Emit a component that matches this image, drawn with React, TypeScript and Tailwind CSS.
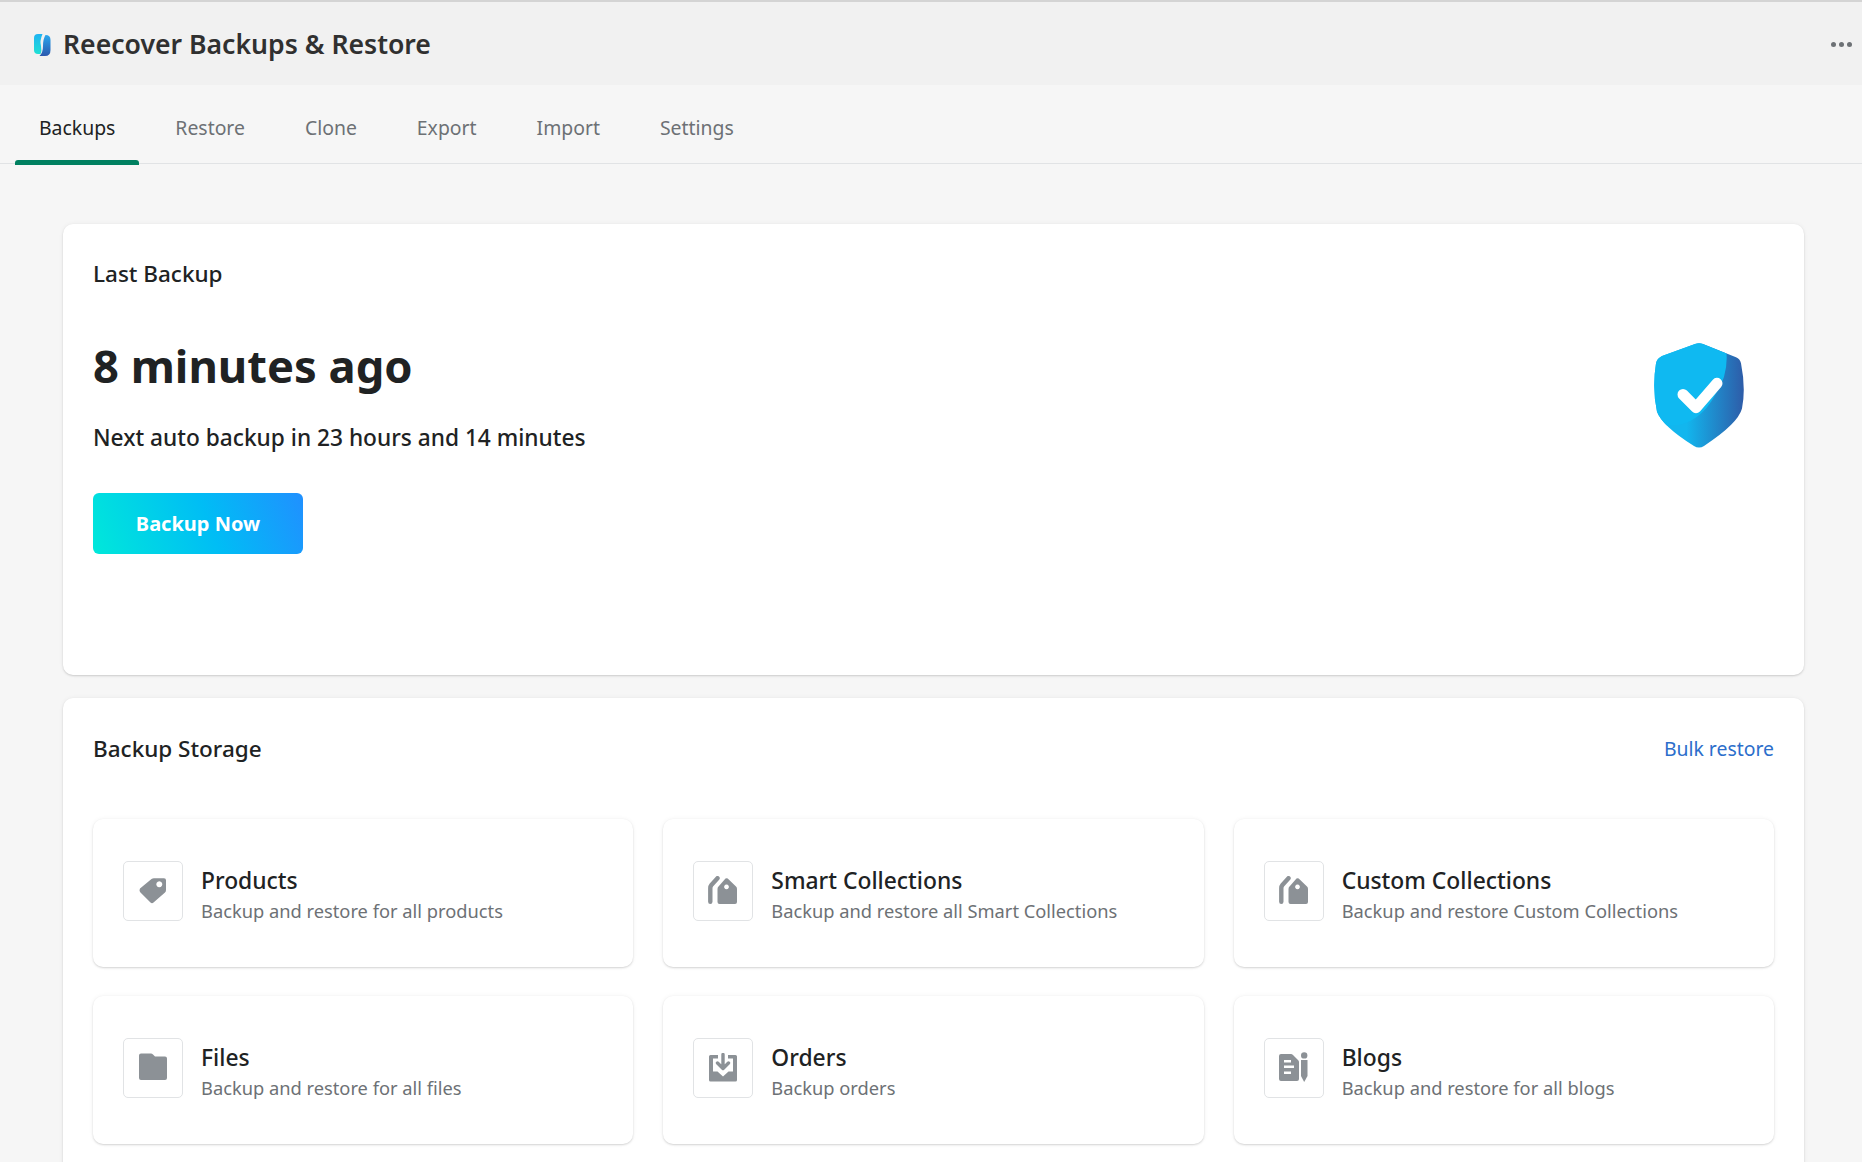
import React from "react";

const Tag = () => (
  <svg width="28" height="28" viewBox="0 0 28 28" fill="#8c9196" className="mt-[2px]">
    <path fillRule="evenodd" d="M1 11.5 12.5 2Q13.5 1.3 15 1.3H25Q27 1.3 27 3.3V13Q27 14.5 26 15.5L14.5 25.5Q13 26.8 11.5 25.5L1 15Q0 13 1 11.5ZM20.3 4.2a3 3 0 1 0 .01 0Z" />
  </svg>
);
const Collection = () => (
  <svg width="30" height="29" viewBox="0 0 30 29" fill="#8c9196">
    <path d="M9.5 2.2 3.4 9Q2.3 10.3 2.3 12.2V25.8" fill="none" stroke="#8c9196" strokeWidth="4.4" strokeLinecap="round" />
    <path fillRule="evenodd" d="M17.5 2.6Q18.6 1.8 19.7 2.6L28 10.6Q29 11.6 29 13V26Q29 28 27 28H11.5Q9.5 28 9.5 26V13Q9.5 11.6 10.5 10.6ZM18.5 8.5a2.4 2.4 0 1 0 .01 0Z" />
  </svg>
);
const Folder = () => (
  <svg width="28" height="28" viewBox="0 0 28 28" fill="#8c9196">
    <path d="M2 .5H12Q13 .5 14 1.5L16 3.5H26Q28 3.5 28 5.5V25Q28 27 26 27H2Q0 27 0 25V2.5Q0 .5 2 .5Z" />
  </svg>
);
const Inbox = () => (
  <svg width="28" height="29" viewBox="0 0 28 29" fill="#8c9196">
    <path d="M1.5 2H9V5.5H4V18.5H8.5L14 23.5 19.5 18.5H24V5.5H19V2H26.5Q28 2 28 3.5V27Q28 28.5 26.5 28.5H1.5Q0 28.5 0 27V3.5Q0 2 1.5 2Z" />
    <path d="M14 1.5V14.5M8.5 10 14 15.5 19.5 10" fill="none" stroke="#8c9196" strokeWidth="3.4" strokeLinecap="round" strokeLinejoin="round" />
  </svg>
);
const Blog = () => (
  <svg width="29" height="30" viewBox="0 0 29 30" fill="#8c9196">
    <path fillRule="evenodd" d="M2 2H12Q13 2 14 3L19 8Q20 9 20 10V27Q20 29 18 29H2Q0 29 0 27V4Q0 2 2 2ZM5 8V10.5H12V8ZM5 13.5V16H15V13.5ZM5 19.5V22H12V19.5Z" />
    <circle cx="25.2" cy="3.4" r="3.2" />
    <path d="M22 8H28.5V24L25.2 30 22 24Z" />
  </svg>
);

const Shield = () => (
  <svg width="90" height="106" viewBox="0 0 90 105" preserveAspectRatio="none">
    <defs>
      <linearGradient id="shield" x1="0.2" y1="0" x2="1" y2="0">
        <stop offset="0.2" stopColor="#12b6ee" />
        <stop offset="1" stopColor="#2e5ca8" />
      </linearGradient>
      <clipPath id="shieldClip">
        <path d="M41 1Q45-.5 49 1L82 14Q86 15.5 87 20Q92 45 88 65Q84 80 50 102Q45 105 40 102Q8 82 3 68Q-2 45 2 20Q3 15.5 8 13Z" />
      </clipPath>
    </defs>
    <path d="M41 1Q45-.5 49 1L82 14Q86 15.5 87 20Q92 45 88 65Q84 80 50 102Q45 105 40 102Q8 82 3 68Q-2 45 2 20Q3 15.5 8 13Z" fill="url(#shield)" />
    <path d="M-2-2H71Q77 28 62 50Q45 82 15 82H-2Z" fill="#0fb9f1" clipPath="url(#shieldClip)" />
    <path d="M29 51 42 64 63 40" fill="none" stroke="#fff" strokeWidth="11" strokeLinecap="round" strokeLinejoin="round" />
  </svg>
);

const Logo = () => (
  <svg width="20" height="24" viewBox="0 0 20 24" className="mt-[2px]">
    <defs>
      <linearGradient id="logoA" x1="0" y1="0" x2="0" y2="1">
        <stop offset="0" stopColor="#1fb4f2" />
        <stop offset="1" stopColor="#1fe0d4" />
      </linearGradient>
      <linearGradient id="logoB" x1="0" y1="0" x2="0" y2="1">
        <stop offset="0" stopColor="#2aa8ee" />
        <stop offset="1" stopColor="#2b58ae" />
      </linearGradient>
    </defs>
    <path d="M6 1H10.5Q7.5 8 9 13 10 18 8.5 21H6Q2 21 2 17V5Q2 1 6 1Z" fill="url(#logoA)" />
    <path d="M13.5 2Q18.5 2 18.5 7V17Q18.5 23 13 23H7.5Q11 20 11 13 11 6 13.5 2Z" fill="url(#logoB)" />
  </svg>
);

const items = [
  { title: "Products", desc: "Backup and restore for all products", icon: <Tag /> },
  { title: "Smart Collections", desc: "Backup and restore all Smart Collections", icon: <Collection /> },
  { title: "Custom Collections", desc: "Backup and restore Custom Collections", icon: <Collection /> },
  { title: "Files", desc: "Backup and restore for all files", icon: <Folder /> },
  { title: "Orders", desc: "Backup orders", icon: <Inbox /> },
  { title: "Blogs", desc: "Backup and restore for all blogs", icon: <Blog /> },
];

const tabs = ["Backups", "Restore", "Clone", "Export", "Import", "Settings"];

export default function App() {
  return (
    <div className="h-[1162px] overflow-hidden bg-[#f6f6f6] font-['Noto_Sans','Liberation_Sans',sans-serif] text-[#202223]">
      <header className="flex h-[85px] items-center justify-between border-t-2 border-[#d4d4d4] bg-[#f1f1f1] pl-[32px] pr-[10px]">
        <div className="flex items-center gap-[11px]">
          <Logo />
          <h1 className="mt-[2px] text-[26.6px] font-semibold leading-none text-[#303030]">Reecover Backups &amp; Restore</h1>
        </div>
        <div className="mt-[2px] flex gap-[3px]">
          <span className="h-[5px] w-[5px] rounded-full bg-[#6d7175]" />
          <span className="h-[5px] w-[5px] rounded-full bg-[#6d7175]" />
          <span className="h-[5px] w-[5px] rounded-full bg-[#6d7175]" />
        </div>
      </header>
      <nav className="flex h-[79px] items-stretch gap-[12px] border-b border-[#e1e3e5] pl-[15px]">
        {tabs.map((t, i) => (
          <div key={t} className={`relative flex items-center px-[24px] pt-[7px] text-[19.4px] ${i === 0 ? "text-[#202223]" : "text-[#6d7175]"}`}>
            {t}
            {i === 0 && <span className="absolute bottom-[-2px] left-0 right-0 h-[5px] rounded-t-[3px] bg-[#008060]" />}
          </div>
        ))}
      </nav>
      <main className="flex flex-col gap-[23px] pl-[63px] pr-[58px] pt-[60px]">
        <section className="flex h-[451px] justify-between rounded-[10px] bg-white px-[30px] pt-[34px] shadow-[0_0_5px_rgba(23,24,24,0.05),0_1px_2px_rgba(0,0,0,0.15)]">
          <div className="flex flex-col items-start">
            <h2 className="text-[22.5px] font-medium leading-[32px]">Last Backup</h2>
            <p className="mt-[46px] text-[45.3px] font-bold leading-[60px]">8 minutes ago</p>
            <p className="mt-[26px] text-[22.7px] font-medium leading-[32px]">Next auto backup in 23 hours and 14 minutes</p>
            <button className="mt-[39px] flex h-[61px] w-[210px] items-center justify-center rounded-[6px] bg-[linear-gradient(68deg,#00e8da,#00bdf5_55%,#2090ff)] text-[20px] font-bold text-white">
              Backup Now
            </button>
          </div>
          <div className="pr-[30px] pt-[85px]">
            <Shield />
          </div>
        </section>
        <section className="rounded-[10px] bg-white px-[30px] pb-[30px] pt-[35px] shadow-[0_0_5px_rgba(23,24,24,0.05),0_1px_2px_rgba(0,0,0,0.15)]">
          <div className="flex items-center justify-between">
            <h2 className="text-[22.5px] font-medium leading-[32px]">Backup Storage</h2>
            <a className="text-[19.4px] leading-[32px] text-[#2c6ecb]">Bulk restore</a>
          </div>
          <div className="mt-[54px] grid grid-cols-3 gap-x-[30px] gap-y-[29px]">
            {items.map((it) => (
              <div key={it.title} className="flex h-[148px] items-start gap-[18px] rounded-[10px] bg-white px-[30px] pt-[42px] shadow-[0_0_5px_rgba(23,24,24,0.05),0_1px_2px_rgba(0,0,0,0.15)]">
                <div className="flex h-[60px] w-[60px] shrink-0 items-center justify-center rounded-[5px] border border-[#e1e3e5] pb-[2px]">
                  {it.icon}
                </div>
                <div className="mt-[4px] flex flex-col">
                  <h3 className="text-[22.85px] font-medium leading-[32px]">{it.title}</h3>
                  <p className="text-[18.3px] leading-[27px] text-[#6d7175]">{it.desc}</p>
                </div>
              </div>
            ))}
          </div>
        </section>
      </main>
    </div>
  );
}
